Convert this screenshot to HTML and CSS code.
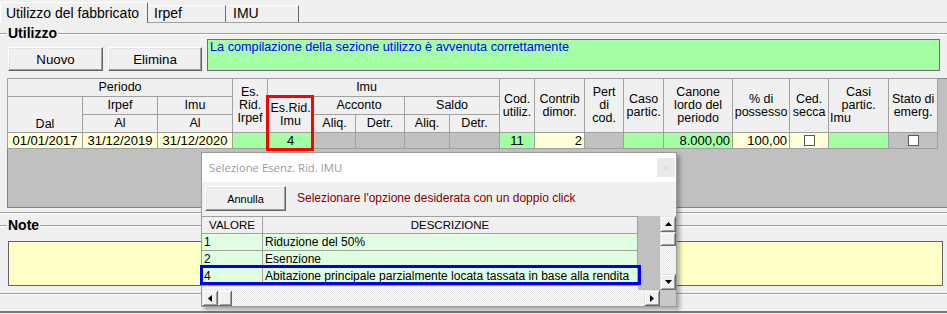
FILE: index.html
```html
<!DOCTYPE html>
<html lang="it">
<head>
<meta charset="utf-8">
<title>Utilizzo del fabbricato</title>
<link rel="stylesheet" href="styles.css">
</head>
<body>
<div class="tabs">
  <div class="tab sel">Utilizzo del fabbricato</div>
  <div class="tab t2">Irpef</div>
  <div class="tab t3">IMU</div>
</div>

<div class="ghead"><span>Utilizzo</span></div>

<div class="toolbar">
  <button class="btn b1">Nuovo</button>
  <button class="btn b2">Elimina</button>
  <div class="msg">La compilazione della sezione utilizzo è avvenuta correttamente</div>
</div>

<div class="grid">
  <table class="dtable">
    <colgroup>
      <col class="k75"><col class="k75"><col class="k75"><col class="k35"><col class="k46">
      <col class="k42"><col class="k49"><col class="k45"><col class="k50"><col class="k35">
      <col class="k50"><col class="k39"><col class="k40"><col class="k69"><col class="k57">
      <col class="k39"><col class="k60"><col class="k49">
    </colgroup>
    <thead>
      <tr class="h1">
        <th colspan="3">Periodo</th>
        <th rowspan="3">Es.<br>Rid.<br>Irpef</th>
        <th colspan="5" class="imu">Imu</th>
        <th rowspan="3">Cod.<br>utiliz.</th>
        <th rowspan="3">Contrib<br>dimor.</th>
        <th rowspan="3">Pert<br>di<br>cod.</th>
        <th rowspan="3">Caso<br>partic.</th>
        <th rowspan="3">Canone<br>lordo del<br>periodo</th>
        <th rowspan="3">% di<br>possesso</th>
        <th rowspan="3">Ced.<br>secca</th>
        <th rowspan="3">Casi<br>partic.<span class="lft">Imu</span></th>
        <th rowspan="3">Stato di<br>emerg.</th>
      </tr>
      <tr class="h2">
        <th rowspan="2" class="bot">Dal</th>
        <th>Irpef</th>
        <th>Imu</th>
        <th rowspan="2">Es.Rid.<br>Imu</th>
        <th colspan="2">Acconto</th>
        <th colspan="2">Saldo</th>
      </tr>
      <tr class="h3">
        <th>Al</th><th>Al</th><th>Aliq.</th><th>Detr.</th><th>Aliq.</th><th>Detr.</th>
      </tr>
    </thead>
    <tbody>
      <tr class="drow">
        <td class="y c">01/01/2017</td>
        <td class="y c">31/12/2019</td>
        <td class="y c">31/12/2020</td>
        <td class="g"></td>
        <td class="g c">4</td>
        <td></td><td></td><td></td><td></td>
        <td class="g c">11</td>
        <td class="y r">2</td>
        <td></td>
        <td class="g"></td>
        <td class="g r">8.000,00</td>
        <td class="y r">100,00</td>
        <td class="y c"><span class="chk"></span></td>
        <td class="g"></td>
        <td class="c"><span class="chk"></span></td>
      </tr>
    </tbody>
  </table>
</div>

<div class="sep1"></div>
<div class="ghead note"><span>Note</span></div>
<div class="notebox"></div>
<div class="sep2"></div>
<div class="sep3"></div>

<div class="redbox"></div>

<div class="popup">
  <div class="ptitle">
    <span class="ptext">Selezione Esenz. Rid. IMU</span>
    <span class="pclose"><svg width="8" height="8" viewBox="0 0 8 8"><path d="M1 1 7 7M7 1 1 7" stroke="#d2d2d2" stroke-width="1" fill="none"/></svg></span>
  </div>
  <div class="pbar">
    <button class="btn pbtn">Annulla</button>
    <span class="pmsg">Selezionare l'opzione desiderata con un doppio click</span>
  </div>
  <div class="pgrid">
    <div class="plist">
      <table class="ptable">
        <colgroup><col class="pv"><col class="pd"></colgroup>
        <thead>
          <tr class="ph"><th>VALORE</th><th>DESCRIZIONE</th></tr>
        </thead>
        <tbody>
          <tr class="pr1"><td>1</td><td>Riduzione del 50%</td></tr>
          <tr class="pr2"><td>2</td><td>Esenzione</td></tr>
          <tr class="pr3"><td>4</td><td>Abitazione principale parzialmente locata tassata in base alla rendita</td></tr>
        </tbody>
      </table>
      <div class="pfill"></div>
      <div class="psel"></div>
    </div>
    <div class="vscroll">
      <div class="sbtn"><svg width="7" height="4" viewBox="0 0 7 4"><polygon points="0,4 7,4 3.5,0" fill="#000"/></svg></div>
      <div class="sbtn thumb-v"></div>
      <div class="track"></div>
      <div class="sbtn"><svg width="7" height="4" viewBox="0 0 7 4"><polygon points="0,0 7,0 3.5,4" fill="#000"/></svg></div>
    </div>
    <div class="hscroll">
      <div class="sbtn"><svg width="4" height="7" viewBox="0 0 4 7"><polygon points="4,0 4,7 0,3.5" fill="#000"/></svg></div>
      <div class="sbtn thumb-h"></div>
      <div class="track"></div>
      <div class="sbtn"><svg width="4" height="7" viewBox="0 0 4 7"><polygon points="0,0 0,7 4,3.5" fill="#000"/></svg></div>
    </div>
    <div class="corner"></div>
  </div>
</div>
</body>
</html>
```

FILE: styles.css
```css
* { box-sizing: border-box; }

body {
  margin: 0;
  width: 947px;
  height: 314px;
  overflow: hidden;
  position: relative;
  background: #f0f0f0;
  font-family: "Liberation Sans", Arial, sans-serif;
  color: #000;
}

/* ---------- tabs ---------- */
.tabs {
  display: flex;
  align-items: flex-end;
  height: 23px;
  border-bottom: 1px solid #a0a0a0;
}
.tab {
  height: 17px;
  border-top: 1px solid #fff;
  border-right: 1px solid #6a6a6a;
  font-size: 14px;
  line-height: 14px;
  white-space: nowrap;
  background: #f0f0f0;
}
.tab.sel {
  width: 148px;
  height: 21px;
  margin-bottom: -1px;
  border-left: 1px solid #fff;
  padding: 3px 0 0 5px;
}
.tab.t2 { width: 78px; padding-left: 6px; }
.tab.t3 { width: 73px; padding-left: 7px; }

/* ---------- group heading ---------- */
.ghead {
  display: flex;
  height: 16px;
  margin-top: 2px;
  font-weight: bold;
  font-size: 14px;
  line-height: 16px;
}
.ghead::before,
.ghead::after {
  content: "";
  height: 0;
  margin-top: 8px;
  border-top: 1px solid #a0a0a0;
  box-shadow: 0 1px 0 #fff;
}
.ghead::before { width: 7px; }
.ghead::after { flex: 1; }
.ghead span { padding: 0 1px; }
.ghead.note { margin-top: 3px; }

/* ---------- toolbar ---------- */
.toolbar {
  display: flex;
  align-items: flex-end;
  gap: 5px;
  height: 32px;
  margin-top: -2px;
  padding-left: 8px;
}
.btn {
  height: 24px;
  padding: 0;
  background: #f0f0f0;
  border: 1px solid;
  border-color: #fff #646464 #646464 #fff;
  box-shadow: inset -1px -1px 0 #a0a0a0, inset 1px 1px 0 #e3e3e3;
  font-family: "Liberation Sans", Arial, sans-serif;
  font-size: 13.3px;
  color: #000;
  display: flex;
  align-items: center;
  justify-content: center;
}
.b1 { width: 95px; }
.b2 { width: 94px; }
.msg {
  width: 733px;
  height: 32px;
  background: #a4ffa4;
  border: 1px solid #6e6e6e;
  color: #0000ff;
  font-size: 12.7px;
  line-height: 15px;
  padding: 0 2px;
  white-space: nowrap;
}

/* ---------- main grid ---------- */
.grid {
  margin: 7px 0 0 7px;
  height: 130px;
  background: #c0c0c0;
  border: 1px solid #828282;
  border-right: 0;
}
.dtable {
  border-collapse: collapse;
  table-layout: fixed;
  width: 931px;
  margin: -1px 0 0 -1px;
}
.k35 { width: 35px; } .k39 { width: 39px; } .k40 { width: 40px; }
.k42 { width: 42px; } .k45 { width: 45px; } .k46 { width: 46px; }
.k49 { width: 49px; } .k50 { width: 50px; } .k57 { width: 57px; }
.k60 { width: 60px; } .k69 { width: 69px; } .k75 { width: 75px; }

.dtable th {
  background: #f0f0f0;
  border: 1px solid #a0a0a0;
  font-weight: normal;
  font-size: 12.5px;
  line-height: 13px;
  text-align: center;
  vertical-align: middle;
  padding: 0;
  overflow: hidden;
}
.dtable th.imu { padding-right: 34px; }
.dtable th.bot { vertical-align: bottom; padding-bottom: 1px; }
.dtable .lft { display: block; text-align: left; padding-left: 1px; }
.h1, .h2, .h3 { height: 18px; }
.drow { height: 16px; }
.dtable td {
  border: 1px solid #a0a0a0;
  font-size: 13px;
  line-height: 14px;
  padding: 0 2px;
  white-space: nowrap;
  overflow: hidden;
  background: #c0c0c0;
}
.dtable td.y { background: #ffffd8; }
.dtable td.g { background: #a4ffa4; }
.dtable td.c { text-align: center; }
.dtable td.r { text-align: right; }
.chk {
  display: inline-block;
  width: 11px;
  height: 11px;
  background: #fff;
  border: 1px solid #5a5a5a;
  vertical-align: -1px;
}

/* ---------- lower section ---------- */
.sep1, .sep2 {
  border-top: 1px solid #a0a0a0;
  border-bottom: 1px solid #fff;
}
.sep1 { margin-top: 4px; }
.notebox {
  margin: 8px 4px 0 8px;
  height: 45px;
  background: #ffffc8;
  border: 1px solid #646464;
}
.sep2 { margin-top: 7px; }
.sep3 {
  margin-top: 16px;
  border-top: 2px solid #7a7a7a;
}

/* ---------- annotation ---------- */
.redbox {
  position: absolute;
  left: 266px;
  top: 95px;
  width: 48px;
  height: 56px;
  border: 3px solid #ff0000;
}

/* ---------- popup ---------- */
.popup {
  position: absolute;
  left: 201px;
  top: 152px;
  width: 476px;
  height: 155px;
  background: #f0f0f0;
  border: 1px solid #9a9a9a;
  box-shadow: 3px 3px 4px rgba(0, 0, 0, 0.3);
}
.ptitle {
  height: 29px;
  background: #fff;
  display: flex;
  align-items: center;
  justify-content: space-between;
  padding-left: 7px;
  font-family: "Open Sans", "Liberation Sans", sans-serif;
  font-size: 11.3px;
  color: #9a9a9a;
}
.pclose {
  width: 18px;
  height: 19px;
  margin-right: 1px;
  background: #e9e9e9;
  display: flex;
  align-items: center;
  justify-content: center;
}
.pbar {
  height: 29px;
  display: flex;
  align-items: flex-start;
  padding: 4px 0 0 3px;
}
.pbtn {
  width: 81px;
  height: 25px;
  font-size: 11px;
}
.pmsg {
  margin-left: 11px;
  padding-top: 5px;
  font-size: 12px;
  line-height: 15px;
  color: #800000;
  white-space: nowrap;
}
.pgrid {
  margin-top: 5px;
  display: grid;
  grid-template-columns: 458px 16px;
  grid-template-rows: 74px 16px;
}
.plist {
  position: relative;
  background: #c0c0c0;
}
.ptable {
  border-collapse: collapse;
  table-layout: fixed;
  width: 437px;
  margin-left: -1px;
}
.pv { width: 61px; }
.pd { width: 375px; }
.ptable th, .ptable td {
  border: 1px solid #a0a0a0;
  padding: 0 2px;
  white-space: nowrap;
  overflow: hidden;
}
.ptable th {
  background: #f0f0f0;
  font-weight: normal;
  font-size: 11.5px;
  text-align: center;
}
.ptable td {
  background: #e0ffe0;
  font-size: 12px;
  line-height: 14px;
  text-align: left;
}
.ph, .pr1 { height: 17px; }
.pr2 { height: 16px; }
.pr3 { height: 19px; }
.pfill {
  width: 436px;
  height: 5px;
  background: #f0f0f0;
}
.psel {
  position: absolute;
  left: -2px;
  top: 49px;
  width: 441px;
  height: 20px;
  border: 3px solid #0000ff;
}
.vscroll { display: flex; flex-direction: column; }
.hscroll { display: flex; }
.sbtn {
  flex: none;
  width: 16px;
  height: 16px;
  background: #f0f0f0;
  border: 1px solid;
  border-color: #e3e3e3 #696969 #696969 #e3e3e3;
  box-shadow: inset 1px 1px 0 #fff, inset -1px -1px 0 #a0a0a0;
  display: flex;
  align-items: center;
  justify-content: center;
}
.thumb-v { height: 14px; }
.thumb-h { width: 14px; }
.track {
  flex: 1;
  background: repeating-conic-gradient(#ffffff 0 25%, #e2e2e2 0 50%) 0 0 / 2px 2px;
}
.corner { background: #c8c8c8; }
```
